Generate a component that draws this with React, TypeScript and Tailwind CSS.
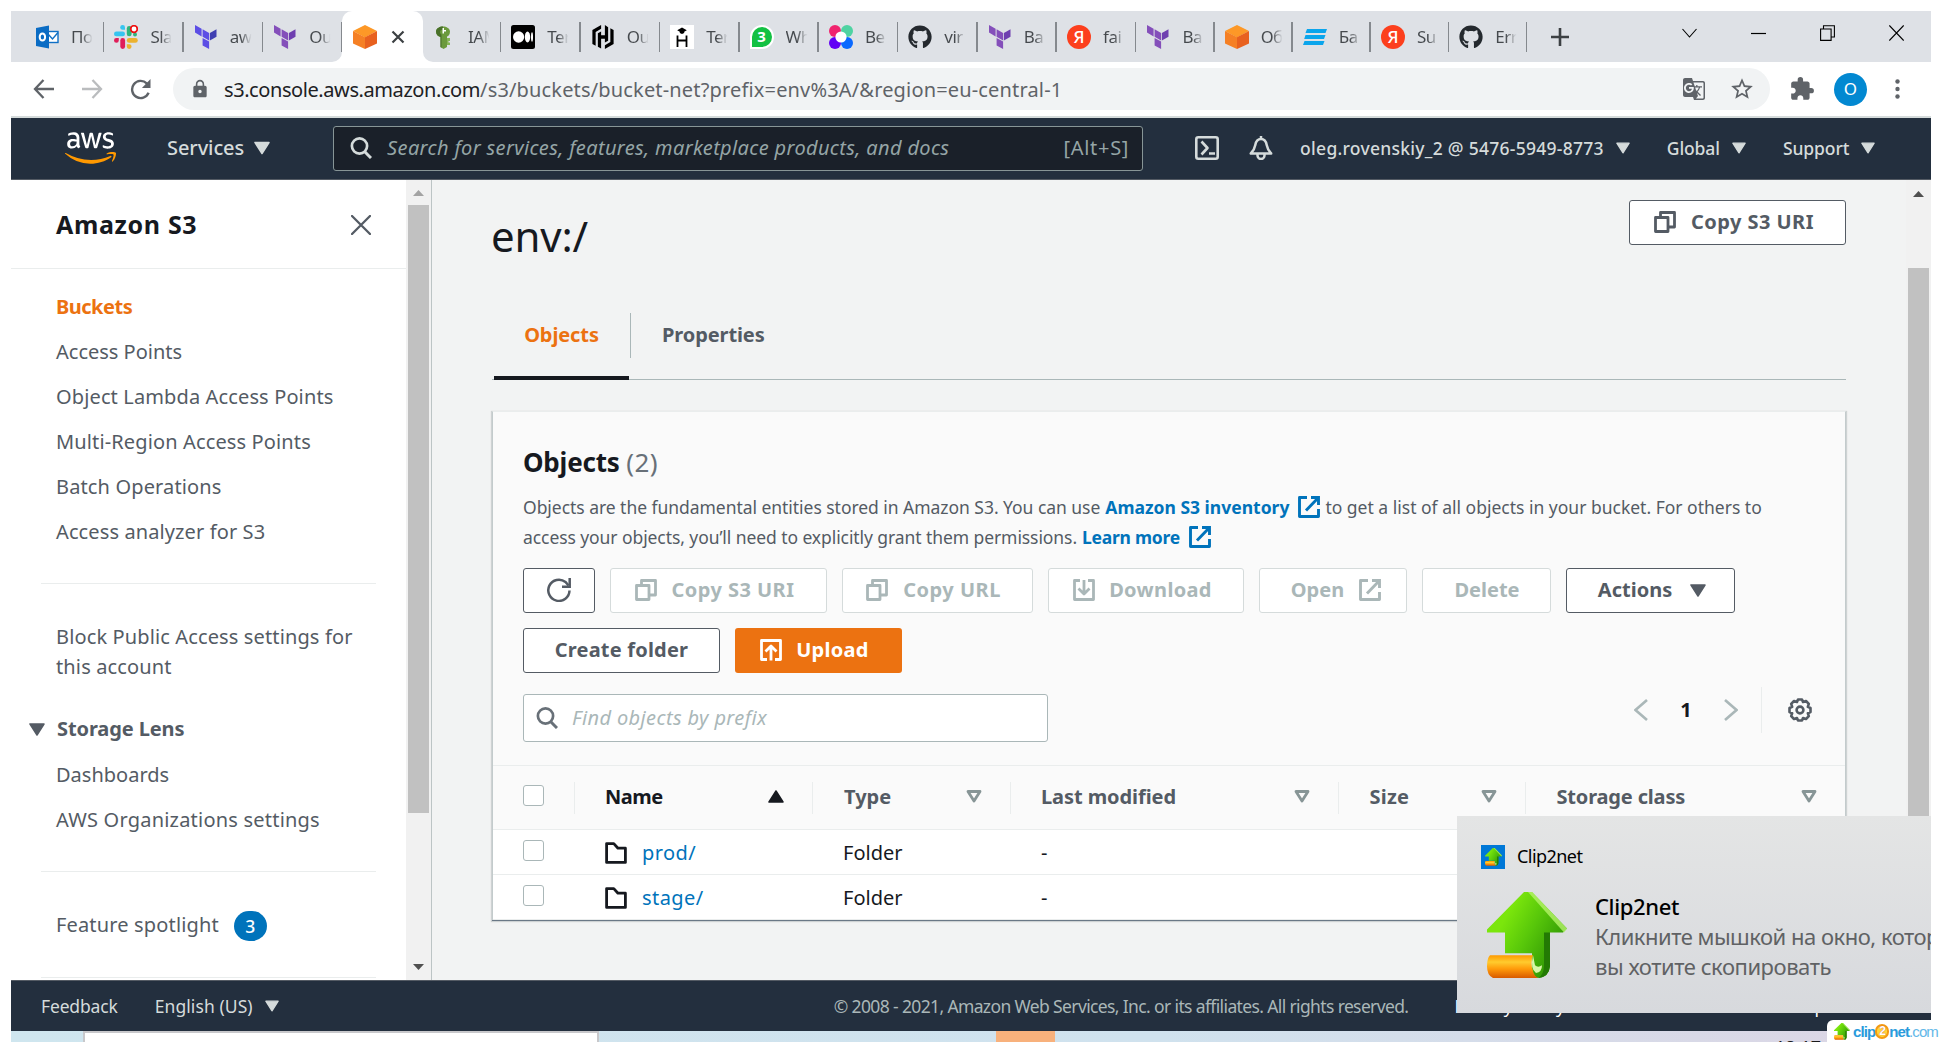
import React from "react";
import type { ReactNode } from "react";
import { FaAws, FaGithub } from "react-icons/fa";
import { MdExtension, MdLock, MdStarBorder, MdGTranslate } from "react-icons/md";

/* ---------- tab favicons ---------- */

const Terraform = ({ light, dark }: { light: string; dark: string }) => (
  <svg viewBox="0 0 24 24" className="h-6 w-6">
    <path fill={light} d="M1 0v7.6l6.6 3.8V3.8zM8.6 4.2v7.6l6.5 3.8V8zM8.6 12.9v7.6l6.5 3.5v-7.4z" />
    <path fill={dark} d="M15.9 8v7.6l6.6-3.8V4.2z" />
  </svg>
);

const Outlook = () => (
  <svg viewBox="0 0 24 24" className="h-6 w-6">
    <rect x="12" y="6.5" width="11" height="11" fill="#fff" stroke="#0f6fc5" strokeWidth="1.4" />
    <path d="M13 9l4.500 5L23 7.500" fill="none" stroke="#0f6fc5" strokeWidth="1.4" />
    <path d="M1 3L14 .5v23L1 21z" fill="#0a6cc4" />
    <ellipse cx="7.4" cy="12" rx="2.7" ry="3.6" fill="none" stroke="#fff" strokeWidth="2" />
  </svg>
);

const Slack = () => (
  <svg viewBox="0 0 24 24" className="h-6 w-6">
    <g fill="#36c5f0">
      <rect x="0" y="6.5" width="11" height="4.8" rx="2.4" />
      <path d="M8.6 0a2.4 2.4 0 0 1 2.4 2.4v2.4H8.6a2.4 2.4 0 0 1 0-4.8z" />
    </g>
    <g fill="#2eb67d">
      <rect x="12.8" y="1" width="4.8" height="10.3" rx="2.4" />
      <circle cx="21" cy="9.4" r="2" />
    </g>
    <g fill="#ecb22e">
      <rect x="12.8" y="13" width="11" height="4.8" rx="2.4" />
      <path d="M15.2 24a2.4 2.4 0 0 1-2.4-2.4v-2.4h2.4a2.4 2.4 0 0 1 0 4.8z" />
    </g>
    <g fill="#e01e5a">
      <rect x="6.3" y="13" width="4.8" height="11" rx="2.4" />
      <path d="M0 15.4A2.4 2.4 0 0 1 2.4 13h2.4v2.4a2.4 2.4 0 0 1-4.8 0z" />
    </g>
    <circle cx="20" cy="4" r="3.3" fill="#fff" stroke="#ee1111" strokeWidth="1.8" />
  </svg>
);

const Cube = () => (
  <svg viewBox="0 0 24 24" className="h-6 w-6">
    <path d="M12 0l12 6-12 6.6L0 6z" fill="#fd9827" />
    <path d="M0 6l12 6.2V24L0 18.5z" fill="#f58025" />
    <path d="M24 6l-12 6.2V24l12-5.5z" fill="#e8611f" />
  </svg>
);

const Key = () => (
  <svg viewBox="0 0 24 24" className="h-6 w-6">
    <path d="M4 6.5C4 3.5 7.500 1.500 11 1.500s7 2 7 5-1.500 4.500-3 5V22l-3.500 2L8.500 22V12C6 11.500 4 9.500 4 6.500z" fill="#6b9a3c" />
    <path d="M4 6.500c0-3 3.500-5 7-5v3c-2 0-3 1-3 2.500 0 1 .5 2 1.500 2.500V23l-1-1V12C6 11.500 4 9.500 4 6.500z" fill="#49702a" />
    <path d="M15 13h3v3h-1.500v1.500H18V20h-3z" fill="#86b556" />
    <path d="M10.500 3h1.500v2h2v1.500h-2V8.500h-1.500z" fill="#fff" />
  </svg>
);

const Medium = () => (
  <svg viewBox="0 0 24 24" className="h-6 w-6">
    <rect width="24" height="24" rx="2.5" />
    <g fill="#fff">
      <ellipse cx="7.600" cy="12" rx="5.600" ry="5.700" />
      <ellipse cx="16.500" cy="12" rx="2.700" ry="5.400" />
      <ellipse cx="21" cy="12" rx="1" ry="4.800" />
    </g>
  </svg>
);

const Hashi = () => (
  <svg viewBox="0 0 24 24" className="h-6 w-6">
    <path d="M10.114 0L1.394 5.036v13.928l3.250 1.875V6.910l5.470-3.158zm3.770 0v10.180h-3.770V6.485l-3.250 1.876v13.360l3.250 1.883V13.830h3.770v3.684l3.250-1.876V2.280zm5.470 3.160v13.930l-5.470 3.160V24l8.722-5.035V5.036z" />
  </svg>
);

const Learn = () => (
  <svg viewBox="0 0 24 24" className="h-6 w-6">
    <rect width="24" height="24" fill="#fff" />
    <path d="M12 2.500l4.800 2.800-2.600 1.500v1.200l-2.200 1-2.200-1V6.800L7.200 5.300z" />
    <path d="M7.500 10.500v11.500M16.500 10.500v11.500M7.500 15.500h9" stroke="#000" strokeWidth="1.800" fill="none" />
  </svg>
);

const WhatsApp = () => (
  <span className="relative flex h-6 w-6 items-center justify-center rounded-full rounded-bl-none border-2 border-white bg-[#13c143] text-[15px] font-bold leading-none text-white">
    3
  </span>
);

const Petals = () => (
  <svg viewBox="0 0 24 24" className="h-6 w-6">
    <circle cx="6" cy="6" r="6" fill="#f0246e" />
    <circle cx="18" cy="6" r="6" fill="#4fd3a2" />
    <circle cx="6" cy="18" r="6" fill="#6200f5" />
    <circle cx="18" cy="18" r="6" fill="#0a69ff" />
    <circle cx="12" cy="12" r="5.600" fill="#fff" />
  </svg>
);

const Yandex = () => (
  <span className="flex h-6 w-6 items-center justify-center rounded-full bg-[#fc3f1d] text-[17px] font-medium leading-none text-white">
    Я
  </span>
);

const Bars = () => (
  <svg viewBox="0 0 24 24" className="h-6 w-6">
    <g fill="#0ba5ec">
      <path d="M4 4h20l-1.500 4H2.500zM2.500 10h20L21 14H1.200zM1.500 16h20L20 20H0z" />
    </g>
  </svg>
);

const violet = <Terraform light="#844fba" dark="#6f3fb0" />;
const blue = <Terraform light="#5c4ee5" dark="#4040b2" />;
const octocat = <FaGithub className="h-6 w-6 text-[#24292e]" />;

type TabInfo = { icon: ReactNode; text: string; active?: boolean; narrow?: boolean };

const tabs: TabInfo[] = [
  { icon: <Outlook />, text: "По" },
  { icon: <Slack />, text: "Sla" },
  { icon: blue, text: "aw" },
  { icon: violet, text: "Ou" },
  { icon: <Cube />, text: "", active: true },
  { icon: <Key />, text: "IAM" },
  { icon: <Medium />, text: "Ter" },
  { icon: <Hashi />, text: "Ou" },
  { icon: <Learn />, text: "Ter" },
  { icon: <WhatsApp />, text: "Wh" },
  { icon: <Petals />, text: "Be" },
  { icon: octocat, text: "vir" },
  { icon: violet, text: "Ba" },
  { icon: <Yandex />, text: "fai" },
  { icon: violet, text: "Ba", narrow: true },
  { icon: <Cube />, text: "Об", narrow: true },
  { icon: <Bars />, text: "Ба", narrow: true },
  { icon: <Yandex />, text: "Su", narrow: true },
  { icon: octocat, text: "Err", narrow: true },
];

function Tab({ icon, text, active, narrow }: TabInfo) {
  if (active) {
    return (
      <div className="relative -mx-px flex h-full w-[81.4px] shrink-0 items-center rounded-t-[10px] bg-white pl-[11px]">
        <span className="absolute bottom-0 -left-2.5 h-2.5 w-2.5 bg-white">
          <span className="block h-full w-full rounded-br-[10px] bg-[#dee1e6]" />
        </span>
        <span className="absolute -right-2.5 bottom-0 h-2.5 w-2.5 bg-white">
          <span className="block h-full w-full rounded-bl-[10px] bg-[#dee1e6]" />
        </span>
        {icon}
        <svg viewBox="0 0 14 14" className="ml-[14px] h-3.5 w-3.5">
          <path d="M1.500 1.500l11 11M12.500 1.500l-11 11" stroke="#3c4043" strokeWidth="2.200" />
        </svg>
      </div>
    );
  }
  return (
    <div className={`flex h-full shrink-0 items-center ${narrow ? "w-[78.2px]" : "w-[79.4px]"}`}>
      <div className="flex min-w-0 flex-1 items-center pl-[10px]">
        {icon}
        <span className="ml-3 w-[24px] overflow-hidden whitespace-nowrap bg-linear-to-r from-[#45494d] from-45% to-transparent to-90% bg-clip-text text-[17px] leading-6 tracking-[-0.500px] text-transparent">
          {text}
        </span>
      </div>
      <span className="h-[30px] w-[1.600px] bg-[#85898e]" />
    </div>
  );
}

/* ---------- console icons ---------- */

const Down = ({ className = "" }: { className?: string }) => (
  <svg viewBox="0 0 16 13" className={className || "h-[13px] w-4"}>
    <path d="M1 1h14L8 12z" fill="currentColor" stroke="currentColor" strokeWidth="1.500" strokeLinejoin="round" />
  </svg>
);
const DownHollow = () => (
  <svg viewBox="0 0 16 13" className="h-[13px] w-4 text-[#879596]">
    <path d="M2 1.500h12L8 11z" fill="none" stroke="currentColor" strokeWidth="2.800" strokeLinejoin="round" />
  </svg>
);
const Search = () => (
  <svg viewBox="0 0 22 22" className="h-[22px] w-[22px]">
    <circle cx="9.500" cy="9" r="7.600" fill="none" stroke="currentColor" strokeWidth="2.700" />
    <path d="M14.500 14.500l6.500 6.500" stroke="currentColor" strokeWidth="3" />
  </svg>
);
const Copy = () => (
  <svg viewBox="0 0 22 22" className="h-[22px] w-[22px]">
    <g fill="none" stroke="currentColor" strokeWidth="2.800" strokeLinejoin="round">
      <path d="M1.500 6.500h12.500v14H1.500z" />
      <path d="M6.500 6V1.500h14v14.500H15" />
    </g>
  </svg>
);
const External = () => (
  <svg viewBox="0 0 22 22" className="h-[22px] w-[22px]">
    <g fill="none" stroke="currentColor" strokeWidth="2.900">
      <path d="M9 1.500H1.500v19h19V13" strokeLinejoin="round" />
      <path d="M13 1.500h7.500V9M20.500 1.500L8 14.500" />
    </g>
  </svg>
);
const Download = () => (
  <svg viewBox="0 0 22 22" className="h-[22px] w-[22px]">
    <g fill="none" stroke="currentColor" strokeWidth="2.800" strokeLinejoin="round">
      <path d="M7 1.500H1.500v19h19v-19H15" />
      <path d="M11 1v13.500M5.500 9.500L11 15l5.500-5.500" />
    </g>
  </svg>
);
const Upload = () => (
  <svg viewBox="0 0 22 22" className="h-[22px] w-[22px]">
    <g fill="none" stroke="currentColor" strokeWidth="2.800" strokeLinejoin="round">
      <path d="M7 20.500H1.500v-19h19v19H15" />
      <path d="M11 21.500V7.500M5.500 12.500L11 7l5.500 5.500" />
    </g>
  </svg>
);
const Refresh = () => (
  <svg viewBox="0 0 24 24" className="h-6 w-6">
    <path d="M22.500 12.500A10.600 10.600 0 1 1 18.500 4l3 3.500" fill="none" stroke="currentColor" strokeWidth="2.500" />
    <path d="M22.700 0v8.700H15" fill="none" stroke="currentColor" strokeWidth="2.500" />
  </svg>
);
const Gear = () => (
  <svg viewBox="0 0 24 24" className="h-6 w-6">
    <g fill="none" stroke="currentColor" strokeWidth="2.600" strokeLinejoin="round">
      <path d="M10 1.500h4l1 2.500 3-1 2.800 2.800-1 3 2.700 1.200v4l-2.700 1.200 1 3L18 21l-3-1-1 2.500h-4L9 20l-3 1-2.800-2.800 1-3L1.500 14v-4l2.700-1.200-1-3L6 3l3 1z" />
      <circle cx="12" cy="12" r="3.400" />
    </g>
  </svg>
);
const Folder = () => (
  <svg viewBox="0 0 22 22" className="h-[22px] w-[22px] text-[#16191f]">
    <path d="M1.600 20.400V1.600h7.200l4.200 4.600h7.400v14.200z" fill="none" stroke="currentColor" strokeWidth="2.800" strokeLinejoin="round" />
  </svg>
);

function Button({
  children,
  disabled,
  className = "",
}: {
  children: ReactNode;
  disabled?: boolean;
  className?: string;
}) {
  return (
    <button
      className={`flex h-[45px] shrink-0 items-center justify-center whitespace-nowrap rounded-[3px] border bg-white pb-px text-[20px] font-bold leading-[40px] ${
        disabled ? "border-[#d5dbdb] text-[#aab7b8]" : "border-[#545b64] text-[#545b64]"
      } ${className}`}
    >
      {children}
    </button>
  );
}

const Check = () => <span className="block h-[21px] w-[21px] rounded-[3px] border-[1.500px] border-[#aab7b8] bg-white" />;

/* Green arrow standing on an orange roll */
const ClipArrow = ({ className, id }: { className: string; id: string }) => (
  <svg viewBox="0 0 80 88" preserveAspectRatio="none" className={className}>
    <defs>
      <linearGradient id={`${id}g`} x1="0" y1="0" x2="1" y2="0.600">
        <stop offset="0.300" stopColor="#7be60c" />
        <stop offset="0.600" stopColor="#58c70a" />
        <stop offset="1" stopColor="#2d9404" />
      </linearGradient>
      <linearGradient id={`${id}o`} x1="0" y1="0" x2="0" y2="1">
        <stop offset="0" stopColor="#ff9a00" />
        <stop offset="0.300" stopColor="#ffcb2e" />
        <stop offset="0.600" stopColor="#ff9a0a" />
        <stop offset="1" stopColor="#d85a00" />
      </linearGradient>
    </defs>
    <path d="M37 0h8l35 37-4 4H63v34q-1 11-12 12-6-1-6-10V62H18V41H0v-3z" fill={`url(#${id}g)`} />
    <path d="M41 0h4l35 37-3 4z" fill="#b5f26a" opacity="0.800" />
    <path d="M57 41h6v34q-1 11-12 12 6-3 6-13z" fill="#237a04" />
    <path d="M3 64h43q-3 8 0 16 1 5 5 7H6q-6-3-6-12 0-8 3-11z" fill={`url(#${id}o)`} />
    <path d="M46 64q-3 14 3 18 6-1 6-8-4 3-7 0z" fill="#d8f7a8" />
  </svg>
);

/* ---------- page sections ---------- */

function Browser() {
  return (
    <>
      <div className="flex h-[51px] items-center bg-[#dee1e6] pl-[14px]">
        {tabs.map((t, i) => (
          <Tab key={i} {...t} />
        ))}
        <svg viewBox="0 0 18 18" className="ml-[23.500px] h-[18px] w-[18px]">
          <path d="M9 0v18M0 9h18" stroke="#3c4043" strokeWidth="2.600" />
        </svg>
        <div className="ml-auto flex items-center self-start pt-[14px] pr-[27px] text-black">
          <svg viewBox="0 0 15 16" className="mr-[54px] h-4 w-[15px]">
            <path d="M.5 4l7 8 7-8" fill="none" stroke="currentColor" strokeWidth="1.100" />
          </svg>
          <svg viewBox="0 0 15 16" className="mr-[54px] h-4 w-[15px]">
            <path d="M0 8.500h15" stroke="currentColor" strokeWidth="1.200" />
          </svg>
          <svg viewBox="0 0 15 16" className="mr-[54px] h-4 w-[15px]">
            <path d="M.6 4h10.500v11.400H.6zM3.500 4V.7h10.900V12h-3.300" fill="none" stroke="currentColor" strokeWidth="1.100" />
          </svg>
          <svg viewBox="0 0 15 16" className="h-4 w-[15px]">
            <path d="M.3.500l14.400 15M14.700.500L.3 15.500" stroke="currentColor" strokeWidth="1.200" />
          </svg>
        </div>
      </div>

      <div className="flex h-[54px] items-center bg-white pl-[22px] text-[#5f6368]">
        <svg viewBox="0 0 22 20" className="h-5 w-[22px]">
          <path d="M21 10H2M10.500 1L2 10l8.500 9" fill="none" stroke="currentColor" strokeWidth="2.300" />
        </svg>
        <svg viewBox="0 0 22 20" className="ml-[26px] h-5 w-[22px] text-[#babcbe]">
          <path d="M1 10h19M11.500 1l8.500 9-8.500 9" fill="none" stroke="currentColor" strokeWidth="2.300" />
        </svg>
        <svg viewBox="0 0 22 22" className="ml-[27px] h-[21px] w-[21px]">
          <path d="M19.500 14.500A9 9 0 1 1 17.500 4.500L20 7.500" fill="none" stroke="currentColor" strokeWidth="2.500" />
          <path d="M21.500 0v9.500H12.500z" fill="currentColor" />
        </svg>
        <div className="ml-[22px] flex h-[42px] w-[1597px] items-center rounded-full bg-[#f1f3f4] pl-[17px]">
          <MdLock className="h-5 w-5" />
          <div className="ml-3.5 pt-px text-[20px] leading-[42px] text-[#5f6368]">
            <span className="tracking-[-0.420px] text-[#202124]">s3.console.aws.amazon.com</span>
            <span className="tracking-[0.160px]">/s3/buckets/bucket-net?prefix=env%3A/&amp;region=eu-central-1</span>
          </div>
          <MdGTranslate className="ml-auto h-[24px] w-6" />
          <MdStarBorder className="mr-[15px] ml-[23px] h-[26px] w-[26px]" />
        </div>
        <MdExtension className="ml-[19px] h-[26px] w-[26px]" />
        <div className="ml-[19px] flex h-[33px] w-[33px] items-center justify-center rounded-full bg-[#0288d1] text-[17px] text-white">
          O
        </div>
        <svg viewBox="0 0 5 20" className="ml-[28px] h-5 w-[5px]" fill="currentColor">
          <circle cx="2.500" cy="2.500" r="2.200" />
          <circle cx="2.500" cy="10" r="2.200" />
          <circle cx="2.500" cy="17.500" r="2.200" />
        </svg>
      </div>
      <div className="h-0.5 bg-[#d5dbdb]" />
    </>
  );
}

function ConsoleHeader() {
  return (
    <div className="flex h-[62px] items-center border-b border-[#545b64] bg-[#232f3e] pb-px pl-[54px] text-[#d5dbdb]">
      <div className="relative h-[42px] w-[51px]">
        <FaAws preserveAspectRatio="none" className="absolute inset-0 h-[42px] w-[51px] text-white [clip-path:inset(0_0_43%_0)]" />
        <FaAws preserveAspectRatio="none" className="absolute inset-0 h-[42px] w-[51px] text-[#ff9900] [clip-path:inset(57%_0_0_0)]" />
      </div>
      <span className="ml-[51px] text-[20px] font-medium tracking-[-0.100px]">Services</span>
      <Down className="ml-2.5 h-3.5 w-4" />
      <div className="ml-[63px] flex h-[45px] w-[810px] items-center rounded-[3px] border border-[#879596] bg-[#1a2029] pr-[13px] pl-4">
        <Search />
        <span className="ml-[15px] text-[20px] tracking-[0.350px] text-[#95a5a6] italic">
          Search for services, features, marketplace products, and docs
        </span>
        <span className="ml-auto text-[20px] tracking-[0.700px] text-[#95a5a6]">[Alt+S]</span>
      </div>
      <svg viewBox="0 0 24 24" className="ml-[52px] h-6 w-6 shrink-0">
        <g fill="none" stroke="currentColor" strokeWidth="2.600" strokeLinejoin="round">
          <rect x="1.300" y="1.300" width="21.400" height="21.400" rx="2" />
          <path d="M6.500 5.500l6 6.500-6 6.500M14 17.500h6" />
        </g>
      </svg>
      <svg viewBox="0 0 24 24" className="ml-[30px] h-6 w-6 shrink-0">
        <g fill="none" stroke="currentColor" strokeWidth="2.500" strokeLinejoin="round">
          <path d="M1.800 17.500h20.400c-3-3-4-5.500-4.500-8.500C17 5 15 3 12 3S7 5 6.300 9c-.5 3-1.500 5.500-4.500 8.500z" />
          <path d="M12 3V0M8.500 18v1.500a3.500 3.500 0 0 0 7 0V18" />
        </g>
      </svg>
      <span className="ml-[27px] text-[17.500px] font-medium tracking-[0.270px]">oleg.rovenskiy_2 @ 5476-5949-8773</span>
      <Down className="ml-3 h-3 w-3.5" />
      <span className="ml-[37px] text-[17.500px] font-medium tracking-[-0.100px]">Global</span>
      <Down className="ml-3 h-3 w-3.5" />
      <span className="ml-[37px] text-[17.500px] font-medium tracking-[-0.100px]">Support</span>
      <Down className="ml-3 h-3 w-3.5" />
    </div>
  );
}

const navItems = [
  ["Access Points", "tracking-[0px]"],
  ["Object Lambda Access Points", "tracking-[0.130px]"],
  ["Multi-Region Access Points", "tracking-[0.130px]"],
  ["Batch Operations", "tracking-[0.140px]"],
  ["Access analyzer for S3", "tracking-[0.110px]"],
];

function Sidebar() {
  return (
    <div className="flex h-full w-[421px] shrink-0 border-r-[1.500px] border-[#bcc4c5] bg-white">
      <div className="w-[395px] text-[20px] leading-[30px] text-[#545b64]">
        <div className="flex h-[89px] items-center justify-between border-b border-[#eaeded] pr-[35px] pl-[45px]">
          <span className="text-[25px] font-bold tracking-[0.650px] text-[#16191f]">Amazon S3</span>
          <svg viewBox="0 0 20 20" className="mt-px h-5 w-5">
            <path d="M1 1l18 18M19 1L1 19" stroke="currentColor" strokeWidth="2.300" strokeLinecap="round" />
          </svg>
        </div>
        <div className="flex flex-col gap-[15px] pt-[23px] pl-[45px]">
          <div className="font-bold tracking-[-0.500px] text-[#ec7211]">Buckets</div>
          {navItems.map(([label, tracking]) => (
            <div key={label} className={tracking}>
              {label}
            </div>
          ))}
        </div>
        <div className="mt-[36px] mr-[30px] ml-[30px] h-px bg-[#eaeded]" />
        <div className="mt-[38px] w-[360px] pl-[45px] tracking-[0.130px]">
          Block Public Access settings for
          <br />
          this account
        </div>
        <div className="mt-8 flex items-center pl-[18px] font-bold tracking-[-0.100px]">
          <Down />
          <span className="ml-[12px]">Storage Lens</span>
        </div>
        <div className="mt-4 pl-[45px]">Dashboards</div>
        <div className="mt-[15px] pl-[45px] tracking-[0.210px]">AWS Organizations settings</div>
        <div className="mx-[30px] mt-[36px] h-px bg-[#eaeded]" />
        <div className="mt-[38px] flex h-[31px] items-start pl-[45px] tracking-[0.160px]">
          Feature spotlight
          <span className="mt-px ml-[15px] flex h-[30px] w-[33px] items-center justify-center rounded-full bg-[#0073bb] text-[17.500px] font-medium text-white">
            3
          </span>
        </div>
        <div className="mx-[30px] mt-[36px] h-px bg-[#eaeded]" />
      </div>
      <div className="flex w-[25px] flex-col items-center justify-between bg-[#f1f1f1] pt-2.5 pb-2.5">
        <svg viewBox="0 0 11 6" className="h-1.5 w-[11px] shrink-0">
          <path d="M0 6L5.500 0 11 6z" fill="#a3a3a3" />
        </svg>
        <div className="mt-[9px] mb-auto h-[608px] w-[21px] bg-[#c1c1c1]" />
        <svg viewBox="0 0 11 6" className="h-1.5 w-[11px] shrink-0">
          <path d="M0 0l5.500 6L11 0z" fill="#505050" />
        </svg>
      </div>
    </div>
  );
}

const Head = ({ label, tracking, mark, last }: { label: string; tracking: string; mark: ReactNode; last?: boolean }) => (
  <div className={`flex h-8 items-center justify-between border-l border-[#eaeded] pb-0.5 pl-[30px] ${last ? "pr-[28px]" : "pr-7"}`}>
    <span className={tracking}>{label}</span>
    {mark}
  </div>
);

const cols = "grid grid-cols-[81px_238px_198px_327.5px_187px_1fr]";

function ObjectsTable() {
  return (
    <div>
      <div className={`${cols} h-[65px] items-center border-y border-[#eaeded] text-[20px] font-bold text-[#545b64]`}>
        <div className="pb-[5px] pl-[30px]">
          <Check />
        </div>
        <Head
          label="Name"
          tracking="text-[#16191f] tracking-[-0.500px]"
          mark={
            <svg viewBox="0 0 16 13" className="h-[13px] w-4">
              <path d="M1 12h14L8 1z" fill="#16191f" stroke="#16191f" strokeWidth="1.500" strokeLinejoin="round" />
            </svg>
          }
        />
        <Head label="Type" tracking="pl-px tracking-[0px]" mark={<DownHollow />} />
        <Head label="Last modified" tracking="tracking-[-0.080px]" mark={<DownHollow />} />
        <Head label="Size" tracking="pl-px tracking-[0.200px]" mark={<DownHollow />} />
        <Head label="Storage class" tracking="pl-px tracking-[-0.170px]" mark={<DownHollow />} last />
      </div>
      {["prod/", "stage/"].map((name) => (
        <div key={name} className={`${cols} h-[45px] items-center border-b border-[#eaeded] bg-white pt-px text-[20px] leading-[30px] text-[#16191f]`}>
          <div className="pb-[4px] pl-[30px]">
            <Check />
          </div>
          <div className="flex items-center pl-[31px] text-[#0073bb]">
            <Folder />
            <span className="ml-[15px] tracking-[0.450px]">{name}</span>
          </div>
          <div className="pl-[31px]">Folder</div>
          <div className="pl-[31px]">-</div>
        </div>
      ))}
    </div>
  );
}

function Main() {
  return (
    <div className="min-w-0 flex-1 pr-[60px] pl-[60px]">
      <div className="flex h-[133px] items-start justify-between pt-5">
        <h1 className="mt-[11px] -ml-px text-[42px] leading-[50px] tracking-[-0.200px] text-[#16191f]">env:/</h1>
        <Button className="w-[217px] pr-[7px]">
          <Copy />
          <span className="ml-[15px] tracking-[0.450px]">Copy S3 URI</span>
        </Button>
      </div>
      <div className="flex h-[67px] border-b border-[#aab7b8] text-[20px] leading-[43px] font-bold">
        <div className="ml-0.5 flex w-[135px] flex-col justify-between text-center tracking-[-0.100px] text-[#ec7211]">
          Objects
          <span className="-mb-px h-[4px] bg-[#16191f]" />
        </div>
        <div className="ml-px h-[45px] border-l border-[#aab7b8] pl-[31px] tracking-[-0.100px] text-[#545b64]">Properties</div>
      </div>

      <div className="mt-[31px] border-x border-[#c3cbcc] border-t border-t-[#eaeded] bg-[#fafafa] shadow-[0_1px_1px_1px_rgba(0,28,36,0.150),0_1px_0_0_#7d8998]">
        <div className="h-[353px] px-[30px] pt-[35px]">
          <h2 className="text-[26px] leading-[30px] font-bold tracking-[-0.200px] text-[#16191f]">
            Objects <span className="font-normal tracking-[0.500px] text-[#687078]">(2)</span>
          </h2>
          <div className="mt-[15px] text-[17.500px] leading-[30px] whitespace-nowrap text-[#545b64]">
            <div className="flex h-[30px]">
              <span className="tracking-[-0.040px]">Objects are the fundamental entities stored in Amazon S3. You can use</span>
              <b className="ml-[5px] flex items-center gap-[9px] text-[#0073bb]">
                Amazon S3 inventory <External />
              </b>
              <span className="ml-[5px]">to get a list of all objects in your bucket. For others to</span>
            </div>
            <div className="flex h-[30px]">
              <span className="tracking-[-0.080px]">access your objects, you’ll need to explicitly grant them permissions.</span>
              <b className="ml-[5px] flex items-center gap-[9px] tracking-[-0.240px] text-[#0073bb]">
                Learn more <External />
              </b>
            </div>
          </div>
          <div className="mt-4 flex gap-[15px]">
            <Button className="w-[71.500px]">
              <Refresh />
            </Button>
            <Button disabled className="w-[217px] pr-[7px]">
              <Copy />
              <span className="ml-[15px] tracking-[0.450px]">Copy S3 URI</span>
            </Button>
            <Button disabled className="w-[191px] pr-[7px]">
              <Copy />
              <span className="ml-[15px] tracking-[0.500px]">Copy URL</span>
            </Button>
            <Button disabled className="w-[196px] pr-[6px]">
              <Download />
              <span className="ml-[14px] tracking-[0.350px]">Download</span>
            </Button>
            <Button disabled className="w-[148px] pl-[7px]">
              <span className="mr-[15px]">Open</span>
              <External />
            </Button>
            <Button disabled className="w-[129px] pl-0.5">
              Delete
            </Button>
            <Button className="w-[169px] pl-1">
              <span className="mr-[18px]">Actions</span>
              <Down className="h-[13px] w-4" />
            </Button>
          </div>
          <div className="mt-[15px] flex gap-[15px]">
            <Button className="w-[197px]">
              <span className="tracking-[0.200px]">Create folder</span>
            </Button>
            <button className="flex h-[45px] w-[167px] items-center justify-center rounded-[3px] bg-[#ec7211] pr-[8px] pb-px text-[20px] font-bold text-white">
              <Upload />
              <span className="ml-[14px] tracking-[0.300px]">Upload</span>
            </button>
          </div>
          <div className="mt-[21px] flex justify-between">
            <div className="flex h-12 w-[525px] items-center rounded-[3px] border border-[#aab7b8] bg-white pl-3 text-[#687078]">
              <Search />
              <span className="ml-[14px] text-[20px] tracking-[0.380px] text-[#aab7b8] italic">Find objects by prefix</span>
            </div>
            <div className="-mt-[7px] flex h-[46px] items-center pr-[3px]">
              <svg viewBox="0 0 14 22" className="h-[22px] w-3.5">
                <path d="M13 1L1.500 11 13 21" fill="none" stroke="#aab7b8" strokeWidth="2.600" />
              </svg>
              <span className="w-[76px] text-center text-[20px] font-bold text-[#16191f]">1</span>
              <svg viewBox="0 0 14 22" className="h-[22px] w-3.5">
                <path d="M1 1l11.500 10L1 21" fill="none" stroke="#aab7b8" strokeWidth="2.600" />
              </svg>
              <span className="mr-[26px] ml-[23px] h-[46px] w-px bg-[#eaeded]" />
              <span className="text-[#545b64]">
                <Gear />
              </span>
            </div>
          </div>
        </div>
        <ObjectsTable />
      </div>
    </div>
  );
}

function Toast() {
  return (
    <div className="absolute right-0 bottom-[29px] h-[197px] w-[474px] overflow-hidden bg-linear-to-b from-[#e4e5e5] to-[#d7d9dd] whitespace-nowrap">
      <div className="flex items-center pt-[29px] pl-6">
        <span className="flex h-6 w-6 items-center justify-center bg-[#0078d7]">
          <ClipArrow className="h-[18px] w-[17px]" id="s" />
        </span>
        <span className="-mt-0.5 ml-3 text-[18px] leading-6 tracking-[-0.550px] text-black">Clip2net</span>
      </div>
      <div className="flex pl-[30px]">
        <ClipArrow className="mt-[23px] h-[87px] w-20 shrink-0" id="b" />
        <div className="ml-[28px] pt-[22px] text-[22px] leading-[30px] text-[#606264]">
          <div className="font-medium tracking-[-0.350px] text-black">Clip2net</div>
          <div className="tracking-[-0.500px]">Кликните мышкой на окно, которое</div>
          <div className="tracking-[-0.450px]">вы хотите скопировать</div>
        </div>
      </div>
    </div>
  );
}

function Footer() {
  return (
    <div className="flex h-[51px] items-center overflow-hidden border-t border-[#545b64] bg-[#232f3e] pl-[30px] text-[17.500px] whitespace-nowrap text-[#d5dbdb]">
      <span className="tracking-[-0.150px]">Feedback</span>
      <span className="ml-[37px] tracking-[0.080px]">English (US)</span>
      <Down className="ml-3 h-3 w-3.5" />
      <span className="ml-[555px] tracking-[-0.630px] text-[#aab7b8]">
        © 2008 - 2021, Amazon Web Services, Inc. or its affiliates. All rights reserved.
      </span>
      <span className="ml-[46px] text-white">Privacy Policy</span>
      <span className="ml-[46px] text-white">Terms of Use</span>
      <span className="ml-[36px] text-white">Cookie preferences</span>
    </div>
  );
}

export default function App() {
  return (
    <div className="relative h-[1042px] w-[1942px] overflow-hidden bg-white pt-[11px] pl-[11px] font-['Noto_Sans','Open_Sans',sans-serif] whitespace-nowrap">
      <div className="relative flex h-[1031px] w-[1920px] flex-col">
        <Browser />
        <ConsoleHeader />
        <div className="flex h-[800px] bg-[#f2f3f3]">
          <Sidebar />
          <Main />
          <div className="flex w-[25px] flex-col items-center bg-[#f1f1f1] pt-[11px]">
            <svg viewBox="0 0 11 6" className="h-1.5 w-[11px] shrink-0">
              <path d="M0 6L5.500 0 11 6z" fill="#505050" />
            </svg>
            <div className="mt-[71px] h-[600px] w-[21px] bg-[#c1c1c1]" />
          </div>
        </div>
        <Footer />
        <div className="flex h-[11px] overflow-hidden bg-linear-to-r from-[#cfe6ef] via-[#d0e2ee] via-60% to-[#dcd5e4] pl-[72px]">
          <div className="h-5 w-[516px] border-2 border-[#c8c8cb] bg-white" />
          <div className="ml-[397px] w-[59px] bg-[#f8b17c]" />
          <span className="mt-[4px] ml-auto pr-[110px] text-[18px] leading-6 text-[#1a1a1a]">18:17</span>
        </div>
        <Toast />
      </div>
      <div className="absolute right-0 bottom-0 flex h-[22px] w-[115px] items-center rounded-tl-md bg-white pl-[7px] font-['Liberation_Sans'] text-[15px] leading-none font-bold tracking-[-0.900px] text-[#2a9bdc]">
        <ClipArrow className="h-[17px] w-4 shrink-0" id="f" />
        <span className="ml-[3px]">clip</span>
        <span className="flex h-[15px] w-[14px] items-center justify-center rounded-full border-2 border-[#f39a12] bg-[#ffd83a] text-[12px] text-white [text-shadow:0_0_1px_#c33]">
          2
        </span>
        <span>net</span>
        <span className="font-normal text-[#63b8e8]">.com</span>
      </div>
    </div>
  );
}
